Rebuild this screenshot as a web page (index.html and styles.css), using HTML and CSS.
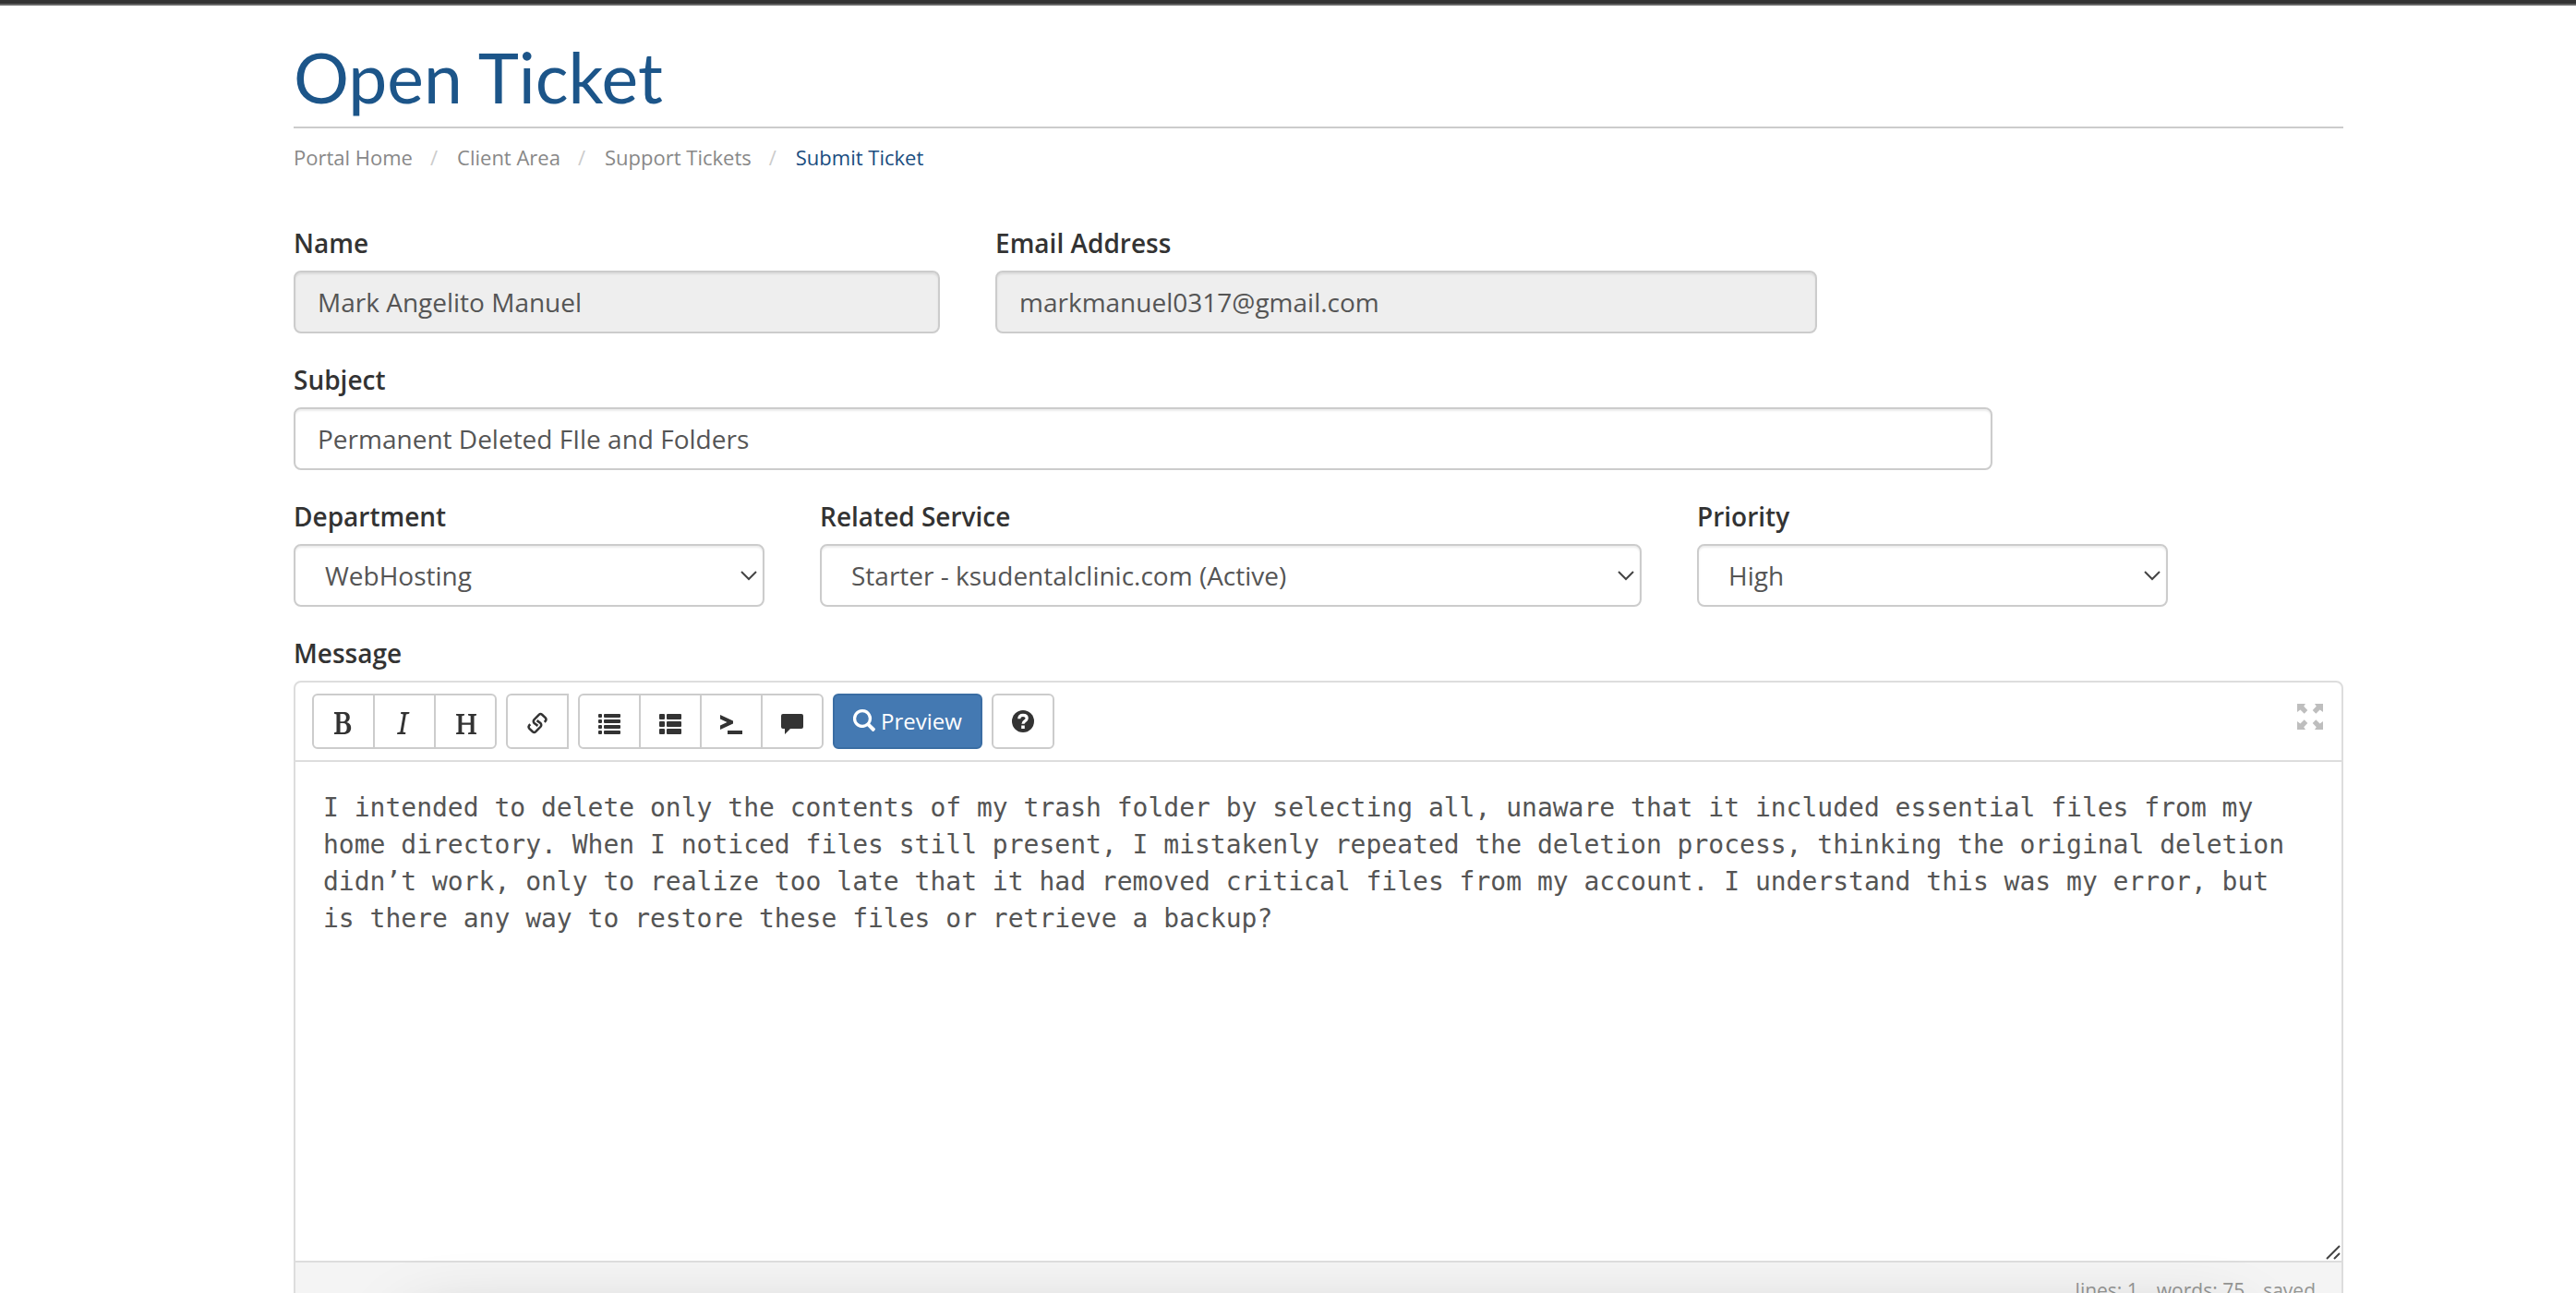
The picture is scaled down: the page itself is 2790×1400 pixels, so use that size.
FILE: index.html
```html
<!DOCTYPE html>
<html lang="en">
<head>
<meta charset="utf-8">
<title>Open Ticket</title>
<link rel="stylesheet" href="styles.css">
</head>
<body>
<div class="topbar"></div>
<main class="page">
  <h1 class="title">Open Ticket</h1>
  <nav aria-label="Breadcrumb">
    <ol class="breadcrumb">
      <li><a href="#">Portal Home</a></li>
      <li><a href="#">Client Area</a></li>
      <li><a href="#">Support Tickets</a></li>
      <li class="current" aria-current="page">Submit Ticket</li>
    </ol>
  </nav>
  <form class="ticket">
    <div class="row">
      <div class="field span-4">
        <label for="name">Name</label>
        <input class="control" id="name" type="text" value="Mark Angelito Manuel" disabled>
      </div>
      <div class="field span-5">
        <label for="email">Email Address</label>
        <input class="control" id="email" type="email" value="markmanuel0317@gmail.com" disabled>
      </div>
    </div>
    <div class="row">
      <div class="field span-10">
        <label for="subject">Subject</label>
        <input class="control" id="subject" type="text" value="Permanent Deleted FIle and Folders">
      </div>
    </div>
    <div class="row">
      <div class="field span-3">
        <label for="department">Department</label>
        <select class="control select" id="department"><option>WebHosting</option></select>
      </div>
      <div class="field span-5">
        <label for="service">Related Service</label>
        <select class="control select" id="service"><option>Starter - ksudentalclinic.com (Active)</option></select>
      </div>
      <div class="field span-3">
        <label for="priority">Priority</label>
        <select class="control select" id="priority"><option>High</option></select>
      </div>
    </div>
    <div class="field">
      <label for="message">Message</label>
      <div class="editor">
        <div class="toolbar">
          <div class="group">
            <button type="button" class="btn" aria-label="Bold"><svg class="icon" viewBox="2 0 24 24"><path fill-rule="evenodd" d="M4 0h10c4.500 0 6.800 2 6.800 5.700 0 2.700-1.300 4.500-3.500 5.300 3 .7 4.900 2.800 4.900 6 0 4.500-3.200 7-8.200 7H4v-1.700l2.500-.7V2.400L4 1.700zM10.500 2v8.200h2.800c2.400 0 3.600-1.600 3.600-4.200S15.700 2 13.300 2zM10.500 12v10h3.200c2.600 0 4-1.800 4-5s-1.400-5-4-5z"/></svg></button>
            <button type="button" class="btn" aria-label="Italic"><svg class="icon" viewBox="1 0 24 24"><path d="M9.300 0h9.200l-.3 1.800-3.400.7-3.300 19 2.900.7-.3 1.800H5l.3-1.800 3.200-.7 3.300-19-2.800-.7z"/></svg></button>
            <button type="button" class="btn" aria-label="Heading"><svg class="icon" viewBox="-1 0 24 24"><path d="M1 2h9v1.600l-2.700.7v7.200h9.400V4.300L14 3.600V2h9v1.600l-2.500.7v17.400l2.500.7V24h-9v-1.600l2.700-.7v-8H7.300v8l2.700.7V24H1v-1.600l2.500-.7V4.300L1 3.600z"/></svg></button>
          </div>
          <div class="group group-link">
            <button type="button" class="btn" aria-label="Link"><svg class="icon stroked" viewBox="0 0 24 25"><path d="M12.500 15.500L8.500 12.600Q6.800 10.600 8.300 8.600L13.800 2.900Q15.500 1.300 17.300 2.900L21 6.400Q22.600 8.200 21.200 10L20 11.200M11.500 9.500L15.500 12.400Q17.200 14.400 15.700 16.400L10.200 22.100Q8.500 23.700 6.700 22.100L3 18.600Q1.400 16.800 2.800 15L4 13.800"/></svg></button>
          </div>
          <div class="group">
            <button type="button" class="btn" aria-label="Unordered list"><svg class="icon" viewBox="0 0 24 24"><path d="M1 2h2q1 0 1 1v2q0 1-1 1H1q-1 0-1-1V3q0-1 1-1zm6 0h16q1 0 1 1v2q0 1-1 1H7q-1 0-1-1V3q0-1 1-1zM1 8h2q1 0 1 1v2q0 1-1 1H1q-1 0-1-1V9q0-1 1-1zm6 0h16q1 0 1 1v2q0 1-1 1H7q-1 0-1-1V9q0-1 1-1zM1 14h2q1 0 1 1v2q0 1-1 1H1q-1 0-1-1v-2q0-1 1-1zm6 0h16q1 0 1 1v2q0 1-1 1H7q-1 0-1-1v-2q0-1 1-1zM1 20h2q1 0 1 1v2q0 1-1 1H1q-1 0-1-1v-2q0-1 1-1zm6 0h16q1 0 1 1v2q0 1-1 1H7q-1 0-1-1v-2q0-1 1-1z"/></svg></button>
            <button type="button" class="btn" aria-label="Ordered list"><svg class="icon" viewBox="0 0 24 24"><path d="M1 2h4q1 0 1 1v4q0 1-1 1H1q-1 0-1-1V3q0-1 1-1zm8 0h14q1 0 1 1v4q0 1-1 1H9q-1 0-1-1V3q0-1 1-1zM1 10h4q1 0 1 1v4q0 1-1 1H1q-1 0-1-1v-4q0-1 1-1zm8 0h14q1 0 1 1v4q0 1-1 1H9q-1 0-1-1v-4q0-1 1-1zM1 18h4q1 0 1 1v4q0 1-1 1H1q-1 0-1-1v-4q0-1 1-1zm8 0h14q1 0 1 1v4q0 1-1 1H9q-1 0-1-1v-4q0-1 1-1z"/></svg></button>
            <button type="button" class="btn" aria-label="Code"><svg class="icon" viewBox="0 0 24 24"><path d="M0 3l14 6.500v3L0 19v-4.500L7.500 11 0 7.500zM8 20h16v4H8z"/></svg></button>
            <button type="button" class="btn" aria-label="Quote"><svg class="icon" viewBox="0 0 24 24"><path d="M2 2h20q2 0 2 2v12q0 2-2 2H10l-6 6v-6H2q-2 0-2-2V4q0-2 2-2z"/></svg></button>
          </div>
          <button type="button" class="btn btn-primary"><svg class="icon" viewBox="0 0 24 24"><path fill-rule="evenodd" d="M10 0a10 10 0 0 1 8.300 15.600l5.200 5q1 1 0 2l-.9.900q-1 1-2 0l-5.100-5.200A10 10 0 1 1 10 0zm0 3.200a6.800 6.800 0 1 0 0 13.600 6.800 6.800 0 0 0 0-13.600z"/></svg><span>Preview</span></button>
          <button type="button" class="btn" aria-label="Help"><svg class="icon" viewBox="0 0 24 24"><circle cx="12" cy="12" r="12"/><path d="M7.800 9.300c0-2.700 1.500-4 4.200-4s4.200 1.300 4.200 3.400c0 3.200-4.200 2.500-4.200 6.100" fill="none" stroke="#fff" stroke-width="3.200"/><path fill="#fff" d="M10.200 16.500h3.600V20h-3.600z"/></svg></button>
          <button type="button" class="expand" aria-label="Fullscreen"><svg viewBox="0 0 28 28"><path d="M0 0h9L7.200 2.800l4.100 4.100-3.600 3.900L3.400 6.600 0 9zM28 0h-9l1.800 2.800-4.100 4.100 3.600 3.900 4.300-4.200L28 9zM0 28h9l-1.800-2.800 4.100-4.100-3.600-3.900-4.300 4.200L0 19zM28 28h-9l1.800-2.800-4.100-4.100 3.600-3.900 4.300 4.200L28 19z"/></svg></button>
        </div>
        <div class="writing">
          <textarea id="message" spellcheck="false">I intended to delete only the contents of my trash folder by selecting all, unaware that it included essential files from my home directory. When I noticed files still present, I mistakenly repeated the deletion process, thinking the original deletion didn’t work, only to realize too late that it had removed critical files from my account. I understand this was my error, but is there any way to restore these files or retrieve a backup?</textarea>
          <svg class="grip" viewBox="0 0 16 16"><path d="M1 15L15 1M9 15l6-6"/></svg>
        </div>
        <div class="status"><span>lines: 1</span><span>words: 75</span><span>saved</span></div>
      </div>
    </div>
  </form>
</main>
</body>
</html>
```
FILE: styles.css
```css
* { box-sizing: border-box; }
html { height: 100%; overflow: hidden; }
body {
  height: 100%;
  margin: 0;
  overflow: hidden;
  background: #fff;
  color: #333;
  font: 28px/40px "Open Sans", "Noto Sans", sans-serif;
}
/* soft shadow cast upwards from below the window edge */
body::after {
  content: "";
  position: fixed;
  left: 450px;
  right: 370px;
  bottom: -240px;
  height: 200px;
  box-shadow: 0 0 80px rgba(0, 0, 0, .28);
  pointer-events: none;
}
a { color: inherit; text-decoration: none; }
button, input, select, textarea { font: inherit; margin: 0; }

.topbar { height: 6px; background: #333; border-bottom: 2px solid #666; }
.page { padding: 0 252px 0 318px; }

.title {
  margin: 0;
  padding: 36px 0 12px;
  border-bottom: 2px solid #ccc;
  color: #1c5589;
  font: 400 75px/83px Lato, "Open Sans", sans-serif;
}
.breadcrumb {
  display: flex;
  margin: 0;
  padding: 15px 0 57px;
  list-style: none;
  color: #888;
  font-size: 22px;
  line-height: 32px;
}
.breadcrumb li + li::before { content: "/"; padding: 0 21px 0 19px; color: #ccc; }
.breadcrumb .current { color: #1a4d80; }

.row { display: grid; grid-template-columns: repeat(12, 1fr); column-gap: 60px; margin-bottom: 30px; }
.span-3 { grid-column: span 3; }
.span-4 { grid-column: span 4; }
.span-5 { grid-column: span 5; }
.span-10 { grid-column: span 10; }
.field label { display: block; margin-bottom: 10px; font-weight: 600; }
.control {
  display: block;
  width: 100%;
  height: 68px;
  padding: 12px 24px;
  border: 2px solid #ccc;
  border-radius: 8px;
  background: #fff;
  box-shadow: inset 0 2px 2px rgba(0, 0, 0, .075);
  color: #555;
}
.control:disabled { background: #eee; }
.select {
  appearance: none;
  padding: 12px 32px;
  background: #fff url("data:image/svg+xml,%3Csvg xmlns='http://www.w3.org/2000/svg' width='20' height='12' viewBox='0 0 20 12'%3E%3Cpath d='M2 2l8 8 8-8' fill='none' stroke='%23444' stroke-width='2'/%3E%3C/svg%3E") no-repeat right 5px center;
}

.editor { border: 2px solid #ddd; border-radius: 8px; overflow: hidden; }
.toolbar {
  display: flex;
  gap: 10px;
  padding: 12px 18px;
  border-bottom: 2px solid #ddd;
}
.group { display: flex; }
.btn {
  display: flex;
  align-items: center;
  justify-content: center;
  gap: 6px;
  min-width: 68px;
  height: 60px;
  padding: 10px 20px;
  border: 2px solid #ccc;
  border-radius: 6px;
  background: #fff;
  color: #333;
  font-size: 24px;
  line-height: 36px;
}
.group .btn + .btn { margin-left: -2px; border-top-left-radius: 0; border-bottom-left-radius: 0; }
.group .btn:not(:last-child), .group-link .btn { border-top-right-radius: 0; border-bottom-right-radius: 0; }
.btn-primary { border-color: #3a6da3; background: #4479b2; color: #fff; }
.icon { flex: none; width: 24px; height: 24px; fill: currentColor; }
.stroked { fill: none; stroke: currentColor; stroke-width: 2.6; }
.group .icon { margin-top: 4px; }
.btn-primary .icon { margin-bottom: 2px; }
.expand { margin: 11px 2px 0 auto; width: 28px; height: 28px; padding: 0; border: 0; background: none; }
.expand svg { display: block; fill: #bebebe; }

.writing { position: relative; }
textarea {
  display: block;
  width: 100%;
  height: 540px;
  padding: 30px;
  border: 0;
  outline: 0;
  resize: none;
  background: #fff;
  color: #555;
  font-family: "DejaVu Sans Mono", "Liberation Mono", monospace;
}
.grip { position: absolute; right: 1px; bottom: 1px; width: 16px; height: 16px; fill: none; stroke: #444; stroke-width: 2; }
.status {
  display: flex;
  justify-content: flex-end;
  gap: 20px;
  padding: 12px 28px;
  border-top: 2px solid #ddd;
  background: #f4f4f4;
  color: #959694;
  font-size: 21px;
  line-height: 36px;
}
```
